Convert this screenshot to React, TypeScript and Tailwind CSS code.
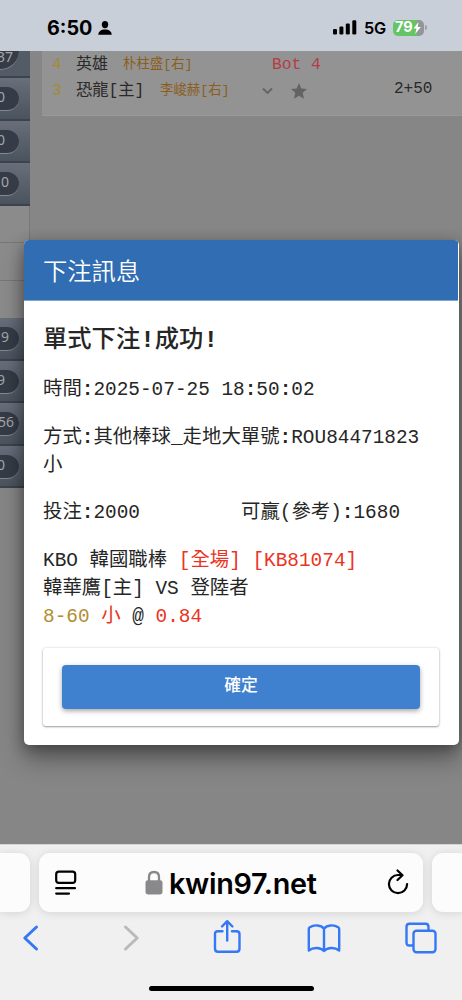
import React from 'react';

interface SideItem {
  count: string;
  pad: string;
}

const TOP_ITEMS: SideItem[] = [
  { count: '0', pad: 'pr-[14px]' },
  { count: '0', pad: 'pr-[14px]' },
  { count: '0', pad: 'pr-[10px]' },
];

const BOTTOM_ITEMS: SideItem[] = [
  { count: '9', pad: 'pr-[10px]' },
  { count: '9', pad: 'pr-[14px]' },
  { count: '56', pad: 'pr-[5px]' },
  { count: '0', pad: 'pr-[14px]' },
];

const MONO = "font-['Liberation_Mono','Noto_Sans_CJK_TC',monospace]";

function SideButton({ count, pad }: SideItem) {
  return (
    <div className="flex h-[42.5px] items-start border-b-2 border-[#3b434d] bg-linear-to-b from-[#686f7b] to-[#4b535e] pt-[9px]">
      <div className={`-ml-5 flex h-6 w-[39px] items-center justify-end rounded-full border-b border-[#85888d] bg-[#353c47] ${pad}`}>
        <span className="-mt-[3px] font-['Noto_Sans',sans-serif] text-[14px] leading-none text-[#a4a6a8]">{count}</span>
      </div>
    </div>
  );
}

function StatusBar() {
  return (
    <div className="flex h-[51px] items-center bg-[#c9cfd8] pt-[5px] pl-[47px] font-[Inter,sans-serif] text-black">
      <span className="mt-px w-[51px] text-[19.8px] leading-none font-bold">6:50</span>
      <svg width="14" height="14" viewBox="0 0 14 14" fill="currentColor">
        <ellipse cx="7" cy="3.6" rx="3.2" ry="3.6" />
        <path d="M0.3 13.7C0.3 10.4 3 8.4 7 8.4S13.7 10.4 13.7 13.7Z" />
      </svg>
      <svg className="-mt-px ml-[221px]" width="24" height="15" viewBox="0 0 24 15" fill="currentColor">
        <rect x="0" y="9" width="4" height="5.5" rx="1.2" />
        <rect x="6.4" y="6.5" width="4" height="8" rx="1.2" />
        <rect x="12.8" y="3.5" width="4" height="11" rx="1.2" />
        <rect x="19.3" y="0.2" width="4" height="14.3" rx="1.2" />
      </svg>
      <span className="ml-[7px] w-[29px] text-[16.3px] leading-none font-semibold tracking-[-0.3px]">5G</span>
      <div className="-mt-px flex h-4 w-[31px] items-center overflow-hidden rounded-[5px] bg-linear-to-r from-[#65c466] from-79% to-[#92969b] to-79% pl-[2px] text-white">
        <span className="text-[14.5px] leading-none font-bold">79</span>
        <svg width="8" height="12" viewBox="0 0 8 12" fill="currentColor">
          <path d="M5.5 0L0.5 6.6H3.5L2.2 12L7.8 5H4.7Z" />
        </svg>
      </div>
      <span className="-mt-px ml-px h-[5px] w-[2px] rounded-r-full bg-[#9aa0a8]" />
    </div>
  );
}

function BetDialog() {
  return (
    <div className={`absolute top-[189px] left-[24px] h-[505px] w-[435px] overflow-hidden rounded-[5px] bg-white text-[19.4px] leading-7 text-[#262626] shadow-[0_14px_24px_rgba(0,0,0,0.35),0_3px_14px_rgba(0,0,0,0.3)] ${MONO}`}>
      <div className="mr-px flex h-[61px] items-center border-b border-[#80a6d3] bg-[#306db2] pl-[19px] font-['Noto_Sans_CJK_TC',sans-serif] text-[24.3px] font-[350] text-white">
        <span className="-mt-px">下注訊息</span>
      </div>
      <div className="px-[19px] pt-[25px]">
        <h2 className="text-[24.3px] leading-[30px] font-medium">單式下注<b>!</b>成功<b>!</b></h2>
        <p className="mt-5">時間<b>:</b>2025-07-25 18<b>:</b>50<b>:</b>02</p>
        <div className="mt-5 flex">
          <p className="whitespace-nowrap">方式<b>:</b>其他棒球_走地大<br />小</p>
          <p>單號<b>:</b>ROU84471823</p>
        </div>
        <div className="mt-[19px] flex">
          <p className="w-[198px]">投注<b>:</b>2000</p>
          <p>可贏(參考)<b>:</b>1680</p>
        </div>
        <div className="mt-5 whitespace-pre">
          <p>KBO 韓國職棒 <span className="text-[#eb3323]">[全場] [KB81074]</span></p>
          <p>韓華鷹[主] VS 登陸者</p>
          <p><span className="text-[#b38e32]">8-60</span> <span className="text-[#eb3323]">小</span> @ <span className="text-[#eb3323]">0.84</span></p>
        </div>
        <div className="mt-[17px] mr-px h-[78px] rounded-[3px] bg-white px-[19px] pt-[17px] shadow-[0_1px_2px_rgba(0,0,0,0.35),0_0_3px_rgba(0,0,0,0.15)]">
          <button className="block h-[44px] w-full rounded-[4px] bg-[#4081cf] pb-[6px] font-['Noto_Sans_CJK_TC',sans-serif] text-[16.8px] leading-none font-medium text-white shadow-[0_2px_5px_rgba(0,0,0,0.35)]">確定</button>
        </div>
      </div>
    </div>
  );
}

function BrowserBar() {
  return (
    <div className="flex h-[156px] flex-col overflow-hidden border-t border-[#d5d5d5] bg-[#f0f0f0]">
      <div className="mt-2 flex h-[59px] gap-[9px]">
        <div className="w-[30px] shrink-0 rounded-r-[11px] bg-[#fcfcfc] shadow-[0_1px_10px_rgba(0,0,0,0.12)]" />
        <div className="flex w-[384px] shrink-0 items-center rounded-[11px] bg-[#fcfcfc] text-black shadow-[0_1px_10px_rgba(0,0,0,0.12)]">
          <svg className="ml-4" width="22" height="26" viewBox="0 0 22 26" fill="none" stroke="currentColor" strokeWidth="2.2" strokeLinecap="round">
            <rect x="1.2" y="1.6" width="19" height="11.3" rx="2.6" />
            <path d="M1.2 18.2H20M1.2 23.6H14" />
          </svg>
          <svg className="-mt-px ml-[68px]" width="18" height="25" viewBox="0 0 18 25">
            <path d="M4 11V7Q4 2 9 2T14 7V11" fill="none" stroke="#89898c" strokeWidth="2.3" />
            <rect x="0.5" y="10.2" width="17" height="14.2" rx="2.4" fill="#89898c" />
          </svg>
          <span className="mt-[3px] ml-[6px] w-[152px] font-[Inter,sans-serif] text-[28.8px] leading-none font-semibold tracking-[-0.3px]">kwin97.net</span>
          <svg className="-mt-0.5 ml-[66px]" width="22" height="26" viewBox="0 0 22 26" fill="none" stroke="currentColor" strokeWidth="2.2" strokeLinecap="round" strokeLinejoin="round">
            <path d="M14.5 6H11A9.1 9.1 0 1 0 20.1 15.1" />
            <path d="M10.5 1.5L15.5 6.2L10.5 11" />
          </svg>
        </div>
        <div className="w-[31px] shrink-0 rounded-l-[11px] bg-[#fcfcfc] shadow-[0_1px_10px_rgba(0,0,0,0.12)]" />
      </div>
      <div className="mt-[7px] flex h-[38px] items-center pl-[22px] text-[#3478f6]">
        <svg width="18" height="28" viewBox="0 0 18 28" fill="none" stroke="currentColor" strokeWidth="3" strokeLinecap="round" strokeLinejoin="round">
          <path d="M14.5 3L2.8 14L14.5 25" />
        </svg>
        <svg className="ml-[82px] text-[#bababa]" width="18" height="28" viewBox="0 0 18 28" fill="none" stroke="currentColor" strokeWidth="3" strokeLinecap="round" strokeLinejoin="round">
          <path d="M3.5 3L15.2 14L3.5 25" />
        </svg>
        <svg className="-mt-1 ml-[73px]" width="28" height="35" viewBox="0 0 28 35" fill="none" stroke="currentColor" strokeWidth="2.4" strokeLinecap="round" strokeLinejoin="round">
          <path d="M9.5 12.2H5Q2 12.2 2 15.2V29.5Q2 32.8 5 32.8H23.5Q26.5 32.8 26.5 29.5V15.2Q26.5 12.2 23.5 12.2H19" />
          <path d="M14.2 21.5V2.5M9 7.5L14.2 2.2L19.4 7.5" />
        </svg>
        <svg className="ml-[66px]" width="34" height="30" viewBox="0 0 34 30" fill="none" stroke="currentColor" strokeWidth="2.4" strokeLinejoin="round">
          <path d="M17 28C13.5 24 6 24 1.8 27.5V6Q1.8 5 2.8 4.3C7 1.5 14 1.7 17 5.7C20 1.7 27 1.5 31.2 4.3Q32.2 5 32.2 6V27.5C28 24 20.5 24 17 28ZM17 5.7V28" />
        </svg>
        <svg className="ml-[64px]" width="32" height="32" viewBox="0 0 32 32" fill="none" stroke="currentColor" strokeWidth="2.4">
          <path d="M8.5 23.5H4.5Q1.5 23.5 1.5 20.5V5Q1.5 1.8 4.5 1.8H20.5Q23.5 1.8 23.5 5V8.5" />
          <rect x="8.5" y="8.8" width="22" height="21.5" rx="3" />
        </svg>
      </div>
      <div className="mx-auto mt-[29px] h-[5px] w-[165px] rounded-full bg-black" />
    </div>
  );
}

export default function App() {
  return (
    <div className="flex h-[1000px] w-[462px] flex-col overflow-hidden">
      <StatusBar />
      <main className="relative h-[793px] overflow-hidden bg-[#868686]">
        <div className="flex h-full">
          {/* Sidebar, scrolled half way out of view */}
          <aside className="flex w-[30px] shrink-0 flex-col overflow-hidden">
            <div className="h-[27px] border-b-2 border-[#3b434d] bg-[#535b66]">
              <div className="-ml-5 flex h-[19px] w-[39px] justify-end rounded-br-full border-b border-[#85888d] bg-[#353c47] pr-[6px]">
                <span className="-mt-px font-['Noto_Sans',sans-serif] text-[14px] leading-none text-[#a4a6a8]">37</span>
              </div>
            </div>
            {TOP_ITEMS.map((item, i) => <SideButton key={i} {...item} />)}
            <div className="h-[37px] border-r border-b border-[#777] bg-[#8b8b8b]" />
            <div className="h-[38px] border-b border-[#777] bg-[#8b8b8b]" />
            <div className="h-[37.5px] bg-[#8b8b8b]" />
            {BOTTOM_ITEMS.map((item, i) => <SideButton key={i} {...item} />)}
          </aside>

          {/* Game row */}
          <section className={`ml-3 h-[65px] flex-1 border-b border-[#999] bg-[#939393] pt-px pl-[10px] text-[16px] text-[#292929] ${MONO}`}>
            <div className="flex h-[26px] items-center whitespace-nowrap">
              <span className="w-[24px] text-[#a08b37]">4</span>
              <span className="w-[47px]">英雄</span>
              <span className="mt-px w-[149px] text-[13.4px] text-[#8b5e1b]">朴柱盛[右]</span>
              <span className="text-[16.3px] text-[#b53c47]">Bot 4</span>
            </div>
            <div className="flex h-[26px] items-center whitespace-nowrap">
              <span className="w-[24px] text-[#a08b37]">3</span>
              <span className="w-[84px] text-[16.3px]">恐龍[主]</span>
              <span className="mt-px w-[102px] text-[13.4px] text-[#8b5e1b]">李峻赫[右]</span>
              <svg width="11" height="8" viewBox="0 0 11 8" fill="none" stroke="#636363" strokeWidth="1.8">
                <path d="M1 1.5L5.5 6L10 1.5" />
              </svg>
              <svg className="ml-[18px]" width="16" height="16" viewBox="0 0 24 24" fill="#636363">
                <path d="M12 0L15.5 8.2L24 9L17.5 14.8L19.5 23.5L12 19L4.5 23.5L6.5 14.8L0 9L8.5 8.2Z" />
              </svg>
              <span className="-mt-1 ml-[87px]">2+50</span>
            </div>
          </section>
        </div>
        <BetDialog />
      </main>
      <BrowserBar />
    </div>
  );
}
